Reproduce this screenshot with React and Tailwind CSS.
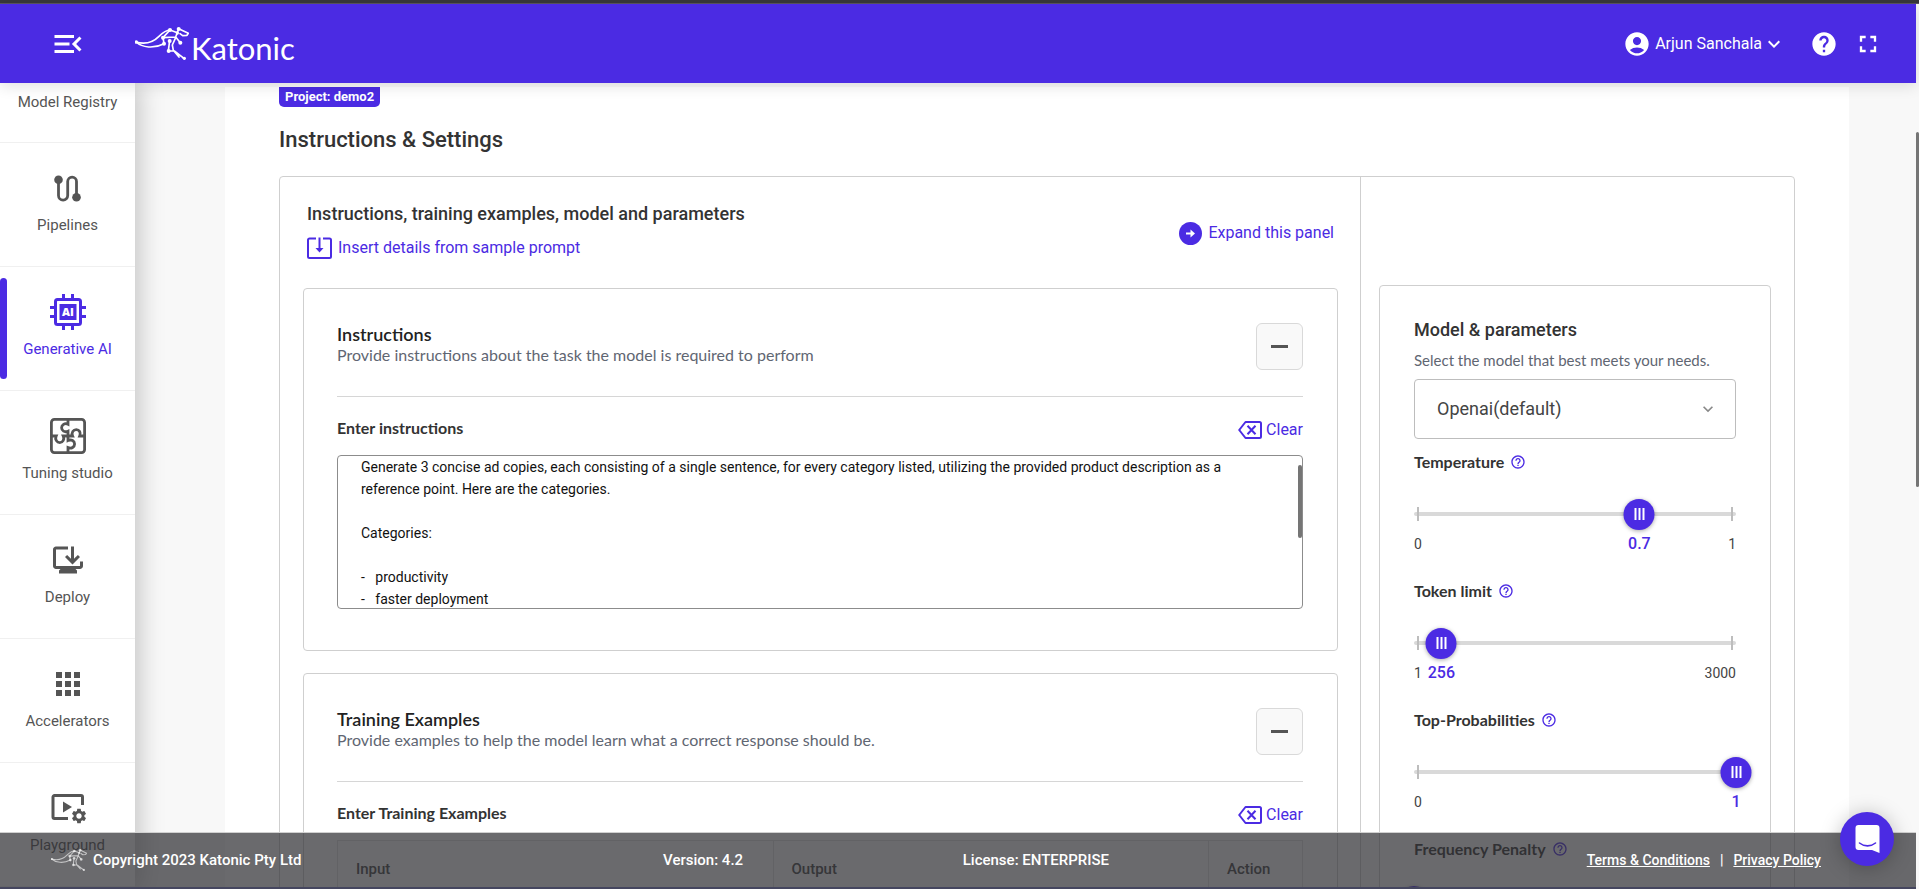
import React, { useEffect, useRef, useState } from "react";
import {
  MdAccountCircle,
  MdApps,
  MdFullscreen,
  MdHelp,
  MdHelpOutline,
  MdKeyboardArrowDown,
  MdMenuOpen,
  MdOutlineBrowserUpdated,
  MdSettings,
} from "react-icons/md";

const PROMPT = `Generate 3 concise ad copies, each consisting of a single sentence, for every category listed, utilizing the provided product description as a reference point. Here are the categories.

Categories:

-   productivity
-   faster deployment
-   collaboration
-   security
-   cost savings
-   scalability`;

const KangarooMark = ({ className }) => (
  <svg
    viewBox="0 0 162 99"
    className={className}
    fill="none"
    stroke="currentColor"
    strokeWidth="5"
    strokeLinecap="round"
    strokeLinejoin="round"
  >
    <path d="M3 45C34 54 54 46 72 28C84 16 92 9 105 9L127 17L131 5L160 19L156 25L143 26L135 20" />
    <path d="M3 45C22 62 56 66 87 50" />
    <path d="M105 9L84 32L122 30L127 17M122 30L136 47M84 32L87 50" />
    <path d="M104 40L100 72L118 72L148 95M122 32L112 54L115 70L132 90" />
    <g fill="currentColor" stroke="none">
      <circle cx="4" cy="45" r="5" />
      <circle cx="105" cy="9" r="6" />
      <circle cx="131" cy="6" r="6" />
      <circle cx="127" cy="18" r="5" />
      <circle cx="84" cy="32" r="6" />
      <circle cx="87" cy="50" r="6" />
      <circle cx="104" cy="42" r="6" />
      <circle cx="136" cy="47" r="6" />
      <circle cx="101" cy="72" r="6" />
      <circle cx="148" cy="94" r="5" />
    </g>
  </svg>
);

const PipelinesIcon = () => (
  <svg viewBox="0 0 27 27" className="size-[27px]" fill="none" stroke="currentColor" strokeWidth="2.8">
    <path d="M4.5 5V20.5a4.6 4.6 0 0 0 9.2 0V6.5a4.4 4.4 0 0 1 8.8 0V22" />
    <circle cx="4.5" cy="4.7" r="4.3" fill="currentColor" stroke="none" />
    <circle cx="22.5" cy="22.3" r="4.3" fill="currentColor" stroke="none" />
  </svg>
);

const ChipIcon = () => (
  <svg viewBox="0 0 36 36" className="size-9" fill="none" stroke="currentColor" strokeWidth="3">
    <rect x="5.5" y="5.5" width="25" height="25" rx="2" />
    <rect x="9.5" y="10" width="17" height="16" fill="currentColor" stroke="none" />
    <path d="M13.5 0v5M22.5 0v5M13.5 31v5M22.5 31v5M0 13.5h5M0 22.5h5M31 13.5h5M31 22.5h5" />
    <text
      x="18"
      y="22"
      textAnchor="middle"
      fill="#fff"
      stroke="none"
      fontSize="11"
      fontWeight="800"
      fontFamily="'Open Sans', sans-serif"
    >
      AI
    </text>
  </svg>
);

const PuzzleIcon = () => (
  <svg viewBox="0 0 36 36" className="size-9" fill="none" stroke="currentColor" strokeWidth="2.8">
    <rect x="1.4" y="1.4" width="33.2" height="33.2" rx="3" />
    <path d="M18 1.5V6.2C14.5 4.6 11.6 7 11.6 9.8S14.5 14.8 18 13.2V18" />
    <path d="M18 34.5V29.6C21.5 31.2 24.6 29 24.6 26S21.5 21 18 22.6V18" />
    <path d="M1.5 18H6.2C4.6 21.5 7 24.6 9.8 24.6S14.8 21.5 13.2 18H22.6C21 14.5 23.4 11.6 26.3 11.6S31.2 14.5 29.7 18H34.5" />
  </svg>
);

const PlaygroundIcon = () => (
  <div className="relative h-[30px] w-9">
    <svg viewBox="0 0 36 30" className="h-[30px] w-9" fill="none" stroke="currentColor" strokeWidth="3">
      <path d="M18 25.5H4.5A1.5 1.5 0 0 1 3 24V4a1.5 1.5 0 0 1 1.5-1.5H31A1.5 1.5 0 0 1 32.5 4V12" />
      <path d="M13 8.5V19.5L22 14Z" fill="currentColor" stroke="none" />
    </svg>
    <MdSettings className="absolute -right-0.5 -bottom-0.5 size-[18px]" />
  </div>
);

const InsertIcon = () => (
  <svg viewBox="0 0 25 22" className="h-[22px] w-[25px]" fill="none" stroke="currentColor" strokeWidth="2">
    <path d="M9 1.5H2.5A1.5 1.5 0 0 0 1 3V19.5A1.5 1.5 0 0 0 2.5 21H22.5A1.5 1.5 0 0 0 24 19.5V3A1.5 1.5 0 0 0 22.5 1.5H16" />
    <path d="M12.5 0.5V13" />
    <path d="M8.5 11H16.5L12.5 15.5Z" fill="currentColor" stroke="none" />
  </svg>
);

const ClearIcon = () => (
  <svg viewBox="0 0 24 18" className="h-[18px] w-6" fill="none" stroke="currentColor" strokeWidth="2">
    <path d="M7.5 1H21.5A1.5 1.5 0 0 1 23 2.5V15.5A1.5 1.5 0 0 1 21.5 17H7.5L1.2 9Z" strokeLinejoin="round" />
    <path d="M9.5 4.8L17.5 13.2M17.5 4.8L9.5 13.2" />
  </svg>
);

const ArrowCircleIcon = () => (
  <svg viewBox="0 0 23 23" className="size-[23px]">
    <circle cx="11.5" cy="11.5" r="11.5" fill="currentColor" />
    <path d="M7 11.5H13" stroke="#fff" strokeWidth="2" />
    <path d="M11.5 7.5L16 11.5L11.5 15.5Z" fill="#fff" />
  </svg>
);

const NAV_ITEMS = [
  { label: "Pipelines", icon: <PipelinesIcon /> },
  { label: "Generative AI", icon: <ChipIcon />, active: true },
  { label: "Tuning studio", icon: <PuzzleIcon /> },
  { label: "Deploy", icon: <MdOutlineBrowserUpdated className="size-9" /> },
  { label: "Accelerators", icon: <MdApps className="size-9" /> },
  { label: "Playground", icon: <PlaygroundIcon /> },
];

const Header = () => (
  <header className="relative z-20 flex h-[79px] shrink-0 items-center bg-[#4b2be3] pr-[34px] pl-[50px] text-white shadow-[0_3px_14px_rgba(0,0,0,0.12)]">
    <button aria-label="Collapse menu">
      <MdMenuOpen className="size-9" />
    </button>
    <a href="#home" className="ml-[49px] flex items-center gap-0.5" aria-label="Katonic home">
      <KangarooMark className="h-[33px] w-[54px]" />
      <span className="pt-2 font-[Lato] text-[31px] leading-8">Katonic</span>
    </a>
    <button className="ml-auto flex items-center text-base">
      <MdAccountCircle className="mr-1 size-7" />
      Arjun Sanchala
      <MdKeyboardArrowDown className="size-6" />
    </button>
    <button className="ml-6" aria-label="Help">
      <MdHelp className="size-7" />
    </button>
    <button className="ml-4" aria-label="Full screen">
      <MdFullscreen className="size-7" />
    </button>
  </header>
);

const Sidebar = () => (
  <nav className="relative z-10 w-[135px] shrink-0 bg-white text-[15px] text-[#555] shadow-[4px_0_24px_rgba(0,0,0,0.22)]">
    <a href="#registry" className="flex h-[60px] justify-center border-b border-[#f0f0f0] pt-[9px] leading-5">
      Model Registry
    </a>
    {NAV_ITEMS.map((item) => (
      <a
        key={item.label}
        href="#nav"
        className={
          item.active
            ? "relative flex h-[124px] flex-col items-center border-b border-[#f0f0f0] pt-[27px] text-[#4b2be3]"
            : "relative flex h-[124px] flex-col items-center border-b border-[#f0f0f0] pt-[27px]"
        }
      >
        {item.active && (
          <span className="absolute top-[11px] left-0 h-[101px] w-[7px] rounded-full bg-[#4b2be3]" />
        )}
        <span className="flex h-9 items-center">{item.icon}</span>
        <span className="mt-[9px] leading-5">{item.label}</span>
      </a>
    ))}
  </nav>
);

const ClearButton = () => (
  <button className="flex items-center gap-1 text-base text-[#4b2be3]">
    <ClearIcon />
    Clear
  </button>
);

const Section = ({ title, description, children }) => (
  <section className="rounded border border-[#cfcfcf] pt-[34px] pr-[34px] pb-[41px] pl-[33px]">
    <div className="flex items-start justify-between border-b border-[#d6d6d6] pb-[26px]">
      <div className="font-[Lato]">
        <h3 className="text-lg leading-[22px] font-semibold text-[#222]">{title}</h3>
        <p className="text-base leading-5 text-[#5f6672]">{description}</p>
      </div>
      <button
        aria-label={`Collapse ${title}`}
        className="flex size-[47px] items-center justify-center rounded-md border border-[#d9d9d9] bg-[#f9f9f9]"
      >
        <span className="h-[3px] w-[17px] bg-[#555]" />
      </button>
    </div>
    {children}
  </section>
);

const InstructionsBox = () => {
  const [text, setText] = useState(PROMPT);
  const ref = useRef(null);

  useEffect(() => {
    ref.current.scrollTop = 22;
  }, []);

  return (
    <>
      <div className="flex h-[58px] items-center justify-between pt-2">
        <label htmlFor="instructions" className="pb-1 font-[Lato] text-base font-bold text-[#333]">
          Enter instructions
        </label>
        <ClearButton />
      </div>
      <div className="relative">
        <textarea
          id="instructions"
          ref={ref}
          value={text}
          onChange={(e) => setText(e.target.value)}
          className="block h-[154px] w-full resize-none rounded border border-[#8c8c8c] py-[22px] pr-10 pl-[23px] text-sm leading-[22px] text-[#111] [scrollbar-width:none]"
        />
        <span className="absolute top-2.5 right-px h-[73px] w-1 rounded-sm bg-[#757575]" />
      </div>
    </>
  );
};

const Slider = ({ label, min, max, initial, step }) => {
  const [value, setValue] = useState(initial);
  const left = `${((value - min) / (max - min)) * 100}%`;
  const id = label.replace(/\s/g, "-");

  return (
    <div className="pt-[11px] pb-2.5">
      <div className="flex h-6 items-center gap-1.5">
        <label htmlFor={id} className="font-[Lato] text-base font-bold text-[#333]">
          {label}
        </label>
        <MdHelpOutline className="size-4 text-[#4b2be3]" />
      </div>
      <div className="relative mt-6 flex h-8 items-center">
        <div className="flex h-1 w-full items-center justify-between rounded-full bg-[#d9d9d9] px-[3px]">
          <span className="h-3.5 w-0.5 bg-[#bdbdbd]" />
          <span className="h-3.5 w-0.5 bg-[#bdbdbd]" />
        </div>
        <span
          style={{ left }}
          className="absolute flex size-[31px] -translate-x-1/2 items-center justify-center gap-0.5 rounded-full bg-[#4b2be3] shadow-[0_1px_4px_rgba(0,0,0,0.35)]"
        >
          <span className="h-3 w-0.5 bg-white" />
          <span className="h-3 w-0.5 bg-white" />
          <span className="h-3 w-0.5 bg-white" />
        </span>
        <input
          id={id}
          type="range"
          min={min}
          max={max}
          step={step}
          value={value}
          onChange={(e) => setValue(Number(e.target.value))}
          className="absolute inset-0 w-full cursor-pointer opacity-0"
        />
      </div>
      <div className="relative flex h-7 items-center justify-between text-sm text-[#444]">
        <span>{value === min ? "" : min}</span>
        <span>{value === max ? "" : max}</span>
        <span style={{ left }} className="absolute -translate-x-1/2 text-base font-medium text-[#4b2be3]">
          {value}
        </span>
      </div>
    </div>
  );
};

const ModelPanel = () => (
  <section className="rounded border border-[#cfcfcf] px-[34px] pt-8">
    <h3 className="text-lg leading-6 font-medium text-[#333]">Model &amp; parameters</h3>
    <label htmlFor="model" className="mt-1.5 block font-[Lato] text-[15px] leading-6 text-[#5f6672]">
      Select the model that best meets your needs.
    </label>
    <div className="relative mt-[7px]">
      <select
        id="model"
        className="block h-[60px] w-full appearance-none rounded border border-[#bdbdbd] bg-white px-[22px] text-lg text-[#444]"
      >
        <option>Openai(default)</option>
      </select>
      <MdKeyboardArrowDown className="pointer-events-none absolute top-5 right-[18px] size-5 text-[#888]" />
    </div>
    <Slider label="Temperature" min={0} max={1} step={0.1} initial={0.7} />
    <Slider label="Token limit" min={1} max={3000} step={1} initial={256} />
    <Slider label="Top-Probabilities" min={0} max={1} step={0.1} initial={1} />
    <Slider label="Frequency Penalty" min={0} max={2} step={0.1} initial={0} />
  </section>
);

const ExamplesTable = () => (
  <table className="w-full table-fixed border-collapse text-left text-[15px] text-[#444]">
    <thead>
      <tr className="h-[58px]">
        <th className="border border-[#e0e0e0] px-[18px] font-medium">Input</th>
        <th className="border border-[#e0e0e0] px-[18px] font-medium">Output</th>
        <th className="w-[94px] border border-[#e0e0e0] px-[18px] font-medium">Action</th>
      </tr>
    </thead>
  </table>
);

const Footer = () => (
  <footer className="absolute right-[3px] bottom-0 left-0 z-20 flex h-[57px] items-center border-t border-b-2 border-t-[#d0d0d0] border-b-[#45465f] bg-[#303034]/72 pr-[95px] pl-[51px] text-[15px] font-medium text-white">
    <KangarooMark className="mr-1.5 h-[22px] w-9 text-white/60" />
    <div className="flex flex-1 items-center justify-between">
      <span>Copyright 2023 Katonic Pty Ltd</span>
      <span className="ml-[142px]">Version: 4.2</span>
      <span>License: ENTERPRISE</span>
      <span className="ml-[258px] flex gap-2.5 text-sm">
        <a href="#terms" className="underline">
          Terms &amp; Conditions
        </a>
        |
        <a href="#privacy" className="underline">
          Privacy Policy
        </a>
      </span>
    </div>
  </footer>
);

const App = () => (
  <div className="relative flex h-screen flex-col overflow-hidden bg-[#f8f8f8] font-[Roboto,sans-serif]">
    <div className="h-1 shrink-0 border-b border-[#5a5560] bg-[#38383a]" />
    <div className="flex min-h-0 flex-1 pr-[3px]">
      <div className="flex min-w-0 flex-1 flex-col">
        <Header />
        <div className="flex min-h-0 flex-1 overflow-hidden">
          <Sidebar />
          <main className="mt-1 mr-[67px] ml-[90px] h-max flex-1 bg-white px-[54px] pb-20">
            <span className="block h-5 w-max rounded-b-[5px] bg-[#4b2be3] px-1.5 text-[13px] leading-5 font-bold text-white">
              Project: demo2
            </span>
            <h2 className="mt-[19px] text-[22px] leading-7 font-medium text-[#333]">
              Instructions &amp; Settings
            </h2>
            <div className="mt-[22px] flex rounded border border-[#cfcfcf]">
              <div className="min-w-0 flex-1 border-r border-[#cfcfcf] pr-[22px] pb-8 pl-[23px]">
                <div className="flex items-center justify-between pt-[25px] pr-1 pb-6 pl-1">
                  <div>
                    <h3 className="text-lg leading-6 font-medium text-[#333]">
                      Instructions, training examples, model and parameters
                    </h3>
                    <button className="mt-2.5 mb-1 flex h-6 items-center gap-1.5 text-base text-[#4b2be3]">
                      <InsertIcon />
                      Insert details from sample prompt
                    </button>
                  </div>
                  <button className="flex items-center gap-1.5 text-base text-[#4b2be3]">
                    <ArrowCircleIcon />
                    Expand this panel
                  </button>
                </div>
                <div className="flex flex-col gap-[22px]">
                  <Section
                    title="Instructions"
                    description="Provide instructions about the task the model is required to perform"
                  >
                    <InstructionsBox />
                  </Section>
                  <Section
                    title="Training Examples"
                    description="Provide examples to help the model learn what a correct response should be."
                  >
                    <div className="flex h-[58px] items-center justify-between pt-2">
                      <h4 className="pb-1 font-[Lato] text-base font-bold text-[#333]">
                        Enter Training Examples
                      </h4>
                      <ClearButton />
                    </div>
                    <ExamplesTable />
                  </Section>
                </div>
              </div>
              <div className="w-[433px] pt-[108px] pr-[23px] pl-[18px]">
                <ModelPanel />
              </div>
            </div>
          </main>
        </div>
      </div>
    </div>

    {/* Page scroll thumb */}
    <div className="absolute top-[132px] right-0 h-[355px] w-[3px] rounded-sm bg-[#757575]" />

    <Footer />

    <button
      aria-label="Open chat"
      className="absolute right-[25px] bottom-[23px] z-30 flex size-[54px] items-center justify-center rounded-full bg-[#4b2be3] shadow-[0_2px_20px_rgba(0,0,0,0.25)]"
    >
      <svg viewBox="0 0 25 28" className="h-7 w-[25px]">
        <path d="M3.5 0H21.5A3 3 0 0 1 24.5 3V28L17 25H3.5A3 3 0 0 1 0.5 22V3A3 3 0 0 1 3.5 0Z" fill="#fff" />
        <path d="M4.5 18C9 21.8 16 21.8 20.5 18" fill="none" stroke="#4b2be3" strokeWidth="1.6" strokeLinecap="round" />
      </svg>
    </button>
  </div>
);

export default App;
